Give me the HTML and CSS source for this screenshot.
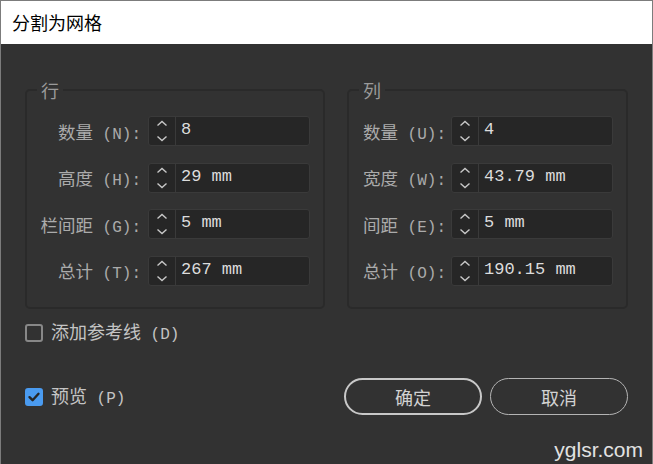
FILE: index.html
```html
<!DOCTYPE html>
<html lang="zh-CN">
<head>
<meta charset="utf-8">
<title>分割为网格</title>
<link rel="stylesheet" href="styles.css">
</head>
<body>
<div class="window">
  <div class="titlebar">分割为网格</div>
  <div class="content">
    <div class="groups">
      <div class="group group-rows">
        <span class="legend">行</span>
        <div class="fields">
          <label class="lbl">数量<span class="key"> (N):</span></label>
          <div class="spin"><span class="arrows"><svg width="12" height="24" viewBox="0 0 12 24"><path d="M1.5 6.5 L6 2.5 L10.5 6.5 M1.5 17.5 L6 21.5 L10.5 17.5" fill="none" stroke="#c8c8c8" stroke-width="1.4"/></svg></span><span class="val">8</span></div>
          <label class="lbl">高度<span class="key"> (H):</span></label>
          <div class="spin"><span class="arrows"><svg width="12" height="24" viewBox="0 0 12 24"><path d="M1.5 6.5 L6 2.5 L10.5 6.5 M1.5 17.5 L6 21.5 L10.5 17.5" fill="none" stroke="#c8c8c8" stroke-width="1.4"/></svg></span><span class="val">29 mm</span></div>
          <label class="lbl">栏间距<span class="key"> (G):</span></label>
          <div class="spin"><span class="arrows"><svg width="12" height="24" viewBox="0 0 12 24"><path d="M1.5 6.5 L6 2.5 L10.5 6.5 M1.5 17.5 L6 21.5 L10.5 17.5" fill="none" stroke="#c8c8c8" stroke-width="1.4"/></svg></span><span class="val">5 mm</span></div>
          <label class="lbl">总计<span class="key"> (T):</span></label>
          <div class="spin"><span class="arrows"><svg width="12" height="24" viewBox="0 0 12 24"><path d="M1.5 6.5 L6 2.5 L10.5 6.5 M1.5 17.5 L6 21.5 L10.5 17.5" fill="none" stroke="#c8c8c8" stroke-width="1.4"/></svg></span><span class="val">267 mm</span></div>
        </div>
      </div>
      <div class="group group-cols">
        <span class="legend">列</span>
        <div class="fields">
          <label class="lbl">数量<span class="key"> (U):</span></label>
          <div class="spin"><span class="arrows"><svg width="12" height="24" viewBox="0 0 12 24"><path d="M1.5 6.5 L6 2.5 L10.5 6.5 M1.5 17.5 L6 21.5 L10.5 17.5" fill="none" stroke="#c8c8c8" stroke-width="1.4"/></svg></span><span class="val">4</span></div>
          <label class="lbl">宽度<span class="key"> (W):</span></label>
          <div class="spin"><span class="arrows"><svg width="12" height="24" viewBox="0 0 12 24"><path d="M1.5 6.5 L6 2.5 L10.5 6.5 M1.5 17.5 L6 21.5 L10.5 17.5" fill="none" stroke="#c8c8c8" stroke-width="1.4"/></svg></span><span class="val">43.79 mm</span></div>
          <label class="lbl">间距<span class="key"> (E):</span></label>
          <div class="spin"><span class="arrows"><svg width="12" height="24" viewBox="0 0 12 24"><path d="M1.5 6.5 L6 2.5 L10.5 6.5 M1.5 17.5 L6 21.5 L10.5 17.5" fill="none" stroke="#c8c8c8" stroke-width="1.4"/></svg></span><span class="val">5 mm</span></div>
          <label class="lbl">总计<span class="key"> (O):</span></label>
          <div class="spin"><span class="arrows"><svg width="12" height="24" viewBox="0 0 12 24"><path d="M1.5 6.5 L6 2.5 L10.5 6.5 M1.5 17.5 L6 21.5 L10.5 17.5" fill="none" stroke="#c8c8c8" stroke-width="1.4"/></svg></span><span class="val">190.15 mm</span></div>
        </div>
      </div>
    </div>
    <div class="check-row">
      <span class="box"></span><span class="check-text">添加参考线<span class="key"> (D)</span></span>
    </div>
    <div class="bottom-row">
      <div class="check-row preview">
        <span class="box checked"><svg width="18" height="18" viewBox="0 0 18 18"><path d="M4.5 9.2 L7.6 12.2 L13.5 5.8" fill="none" stroke="#262626" stroke-width="2.4" stroke-linecap="round" stroke-linejoin="round"/></svg></span><span class="check-text">预览<span class="key"> (P)</span></span>
      </div>
      <div class="buttons">
        <button class="btn btn-primary">确定</button>
        <button class="btn">取消</button>
      </div>
    </div>
  </div>
  <div class="watermark">yglsr.com</div>
</div>
</body>
</html>
```

FILE: styles.css
```css
html, body {
  margin: 0;
  padding: 0;
  background: #323232;
}
.window {
  position: relative;
  width: 653px;
  height: 464px;
  box-sizing: border-box;
  border: 1px solid #7c7c7c;
  border-bottom: none;
  background: #323232;
  overflow: hidden;
  font-family: "Noto Sans CJK SC", sans-serif;
}
.titlebar {
  height: 43px;
  background: #ffffff;
  color: #000000;
  font-size: 18px;
  line-height: 43px;
  padding-left: 11px;
}
.content {
  padding: 45px 23px 0 24px;
}
.groups {
  display: flex;
  gap: 22px;
}
.group {
  border: 2px solid #2a2a2a;
  border-radius: 5px;
  height: 216px;
}
.group-rows { width: 296px; }
.group-cols { width: 277px; }
.legend {
  display: block;
  width: fit-content;
  margin: -11px 0 0 10px;
  padding: 0 4px;
  background: #323232;
  color: #9a9a9a;
  font-size: 18px;
  line-height: 20px;
  height: 20px;
}
.fields {
  display: grid;
  align-items: center;
  row-gap: 16.5px;
  margin-top: 16px;
}
.group-rows .fields {
  grid-template-columns: 114px 162px;
  column-gap: 7px;
}
.group-cols .fields {
  grid-template-columns: 80px 162px;
  column-gap: 8px;
  padding-left: 14px;
}
.lbl {
  color: #ababab;
  font-size: 17.5px;
  white-space: nowrap;
}
.key {
  font-family: "Liberation Mono", monospace;
  font-size: 16px;
  white-space: pre;
}
.group-rows .lbl { text-align: right; }
.spin {
  display: flex;
  height: 30px;
  box-sizing: border-box;
  border: 1px solid #3a3a3a;
  border-radius: 3px;
  background: #262626;
}
.arrows {
  width: 26px;
  display: flex;
  align-items: center;
  justify-content: center;
  border-right: 1px solid #3a3a3a;
}
.arrows svg { display: block; }
.val {
  flex: 1;
  padding-left: 5px;
  color: #dcdcdc;
  font-family: "Liberation Mono", monospace;
  font-size: 17px;
  line-height: 25px;
  white-space: pre;
}
.check-row {
  display: flex;
  align-items: center;
  gap: 8px;
  margin-top: 11px;
}
.box {
  width: 18px;
  height: 18px;
  box-sizing: border-box;
  border: 2px solid #888888;
  border-radius: 3px;
  display: flex;
  align-items: center;
  justify-content: center;
}
.box.checked {
  background: #4a9bf0;
  border-color: #4a9bf0;
}
.box svg { display: block; flex: none; }
.check-text {
  color: #c4c4c4;
  font-size: 18px;
  line-height: 22px;
}
.bottom-row {
  display: flex;
  align-items: center;
  justify-content: space-between;
  margin-top: 32px;
  padding-right: 1px;
}
.bottom-row .preview { margin-top: 0; }
.buttons {
  display: flex;
  gap: 8px;
}
.btn {
  width: 138px;
  height: 37px;
  box-sizing: border-box;
  border: 1px solid #b4b4b4;
  border-radius: 19px;
  background: transparent;
  color: #d2d2d2;
  font-family: "Noto Sans CJK SC", sans-serif;
  font-size: 18px;
  padding: 0;
}
.btn-primary {
  border: 2.5px solid #c8c8c8;
}
.watermark {
  position: absolute;
  right: 9px;
  bottom: 3px;
  color: #e2e2e2;
  font-family: "Liberation Sans", Arial, sans-serif;
  font-size: 21px;
  line-height: 22px;
}
```
